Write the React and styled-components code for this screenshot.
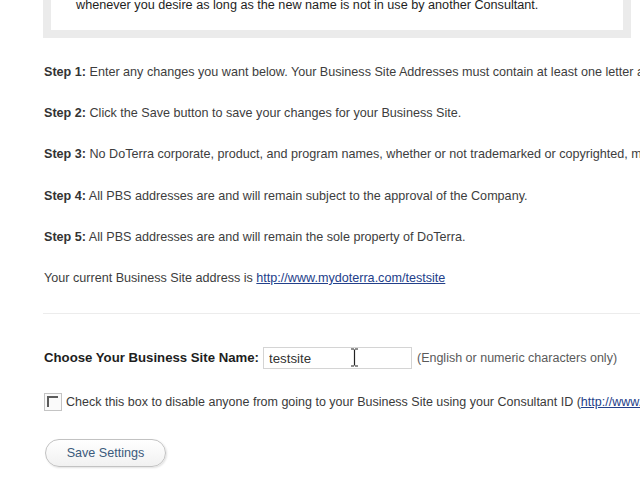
import React from "react";
import styled, { createGlobalStyle } from "styled-components";

const Global = createGlobalStyle`
  html, body { margin: 0; padding: 0; background: #fff; overflow: hidden; }
  body { width: 640px; height: 480px; font-family: "Liberation Sans", Arial, sans-serif; }
`;

const Page = styled.div`
  width: 640px;
  height: 480px;
  overflow: hidden;
  position: relative;
  background: #fff;
`;

const NoticeBox = styled.div`
  margin: 0 9px 0 43px;
  border: 8px solid #ebebeb;
  border-top: none;
  background: #fff;
  padding: 0 20px 18px 25px;
`;

const NoticeText = styled.div`
  font-size: 12.65px;
  line-height: 14px;
  color: #1e1e1e;
  margin-top: -2px;
  white-space: nowrap;
`;

const Content = styled.div`
  padding-left: 44px;
`;

const Steps = styled.div`
  display: flex;
  flex-direction: column;
  gap: 27.2px;
  margin-top: 27px;
`;

const Line = styled.div`
  font-size: 12.6px;
  line-height: 14px;
  color: #3d3d3d;
  white-space: nowrap;
`;

const Bold = styled.b`
  font-weight: bold;
  color: #333;
`;

const Link = styled.a`
  color: #23408a;
  text-decoration: underline;
`;

const Divider = styled.hr`
  margin: 28px 0 0 43px;
  border: none;
  border-top: 1px solid #ececec;
  height: 0;
`;

const NameRow = styled.div`
  display: flex;
  align-items: center;
  margin-top: 33px;
  white-space: nowrap;
`;

const Label = styled.label`
  font-size: 13.2px;
  font-weight: bold;
  color: #1e1e1e;
  margin-right: 4px;
`;

const InputWrap = styled.div`
  position: relative;
`;

const TextInput = styled.input`
  width: 149px;
  height: 22px;
  box-sizing: border-box;
  border: 1px solid #d4d4d4;
  padding: 2px 5px 0;
  font-family: "Liberation Sans", Arial, sans-serif;
  font-size: 13.3px;
  color: #333;
  outline: none;
`;

const Cursor = styled.svg`
  position: absolute;
  left: 87px;
  top: 1px;
  pointer-events: none;
`;

const Hint = styled.span`
  font-size: 12.5px;
  color: #5a5a5a;
  margin-left: 5px;
`;

const CheckRow = styled.div`
  display: flex;
  align-items: center;
  margin-top: 24px;
  white-space: nowrap;
`;

const CheckBox = styled.span`
  width: 18px;
  height: 18px;
  box-sizing: border-box;
  border: 1px solid #c4c4c4;
  background: #fafafa;
  display: inline-flex;
  align-items: flex-start;
  justify-content: flex-start;
  padding: 2px;
  margin-right: 4px;
  flex: none;
`;

const CheckInner = styled.span`
  width: 11px;
  height: 11px;
  border-top: 2px solid #5c5c5c;
  border-left: 2px solid #5c5c5c;
  box-sizing: border-box;
`;

const CheckText = styled.span`
  font-size: 12.5px;
  color: #3a3a3a;
`;

const SaveButton = styled.button`
  margin-top: 28px;
  margin-left: 1px;
  width: 121px;
  height: 28px;
  border-radius: 14px;
  border: 1px solid #c2c2c2;
  background: linear-gradient(#ffffff, #f1f1f1);
  box-shadow: 1px 1px 2px rgba(0, 0, 0, 0.12);
  font-family: "Liberation Sans", Arial, sans-serif;
  font-size: 12.6px;
  color: #3b5a7c;
  cursor: pointer;
`;

const steps = [
  ["Step 1:", "Enter any changes you want below. Your Business Site Addresses must contain at least one letter and no spaces."],
  ["Step 2:", "Click the Save button to save your changes for your Business Site."],
  ["Step 3:", "No DoTerra corporate, product, and program names, whether or not trademarked or copyrighted, may be used."],
  ["Step 4:", "All PBS addresses are and will remain subject to the approval of the Company."],
  ["Step 5:", "All PBS addresses are and will remain the sole property of DoTerra."],
];

export default function App() {
  return (
    <Page>
      <Global />
      <NoticeBox>
        <NoticeText>
          whenever you desire as long as the new name is not in use by another Consultant.
        </NoticeText>
      </NoticeBox>
      <Content>
        <Steps>
          {steps.map(([b, t]) => (
            <Line key={b}>
              <Bold>{b}</Bold> {t}
            </Line>
          ))}
          <Line>
            Your current Business Site address is{" "}
            <Link href="#">http://www.mydoterra.com/testsite</Link>
          </Line>
        </Steps>
      </Content>
      <Divider />
      <Content>
        <NameRow>
          <Label>Choose Your Business Site Name:</Label>
          <InputWrap>
            <TextInput defaultValue="testsite" />
            <Cursor width="9" height="19" viewBox="0 0 9 19">
              <path d="M1 1h3M5 1h3M4.5 1.5v16M1 18h3M5 18h3" stroke="#222" strokeWidth="1.2" fill="none" />
            </Cursor>
          </InputWrap>
          <Hint>(English or numeric characters only)</Hint>
        </NameRow>
        <CheckRow>
          <CheckBox>
            <CheckInner />
          </CheckBox>
          <CheckText>
            Check this box to disable anyone from going to your Business Site using your Consultant ID (
            <Link href="#">http://www.mydoterra.com/123456</Link>)
          </CheckText>
        </CheckRow>
        <SaveButton>Save Settings</SaveButton>
      </Content>
    </Page>
  );
}
